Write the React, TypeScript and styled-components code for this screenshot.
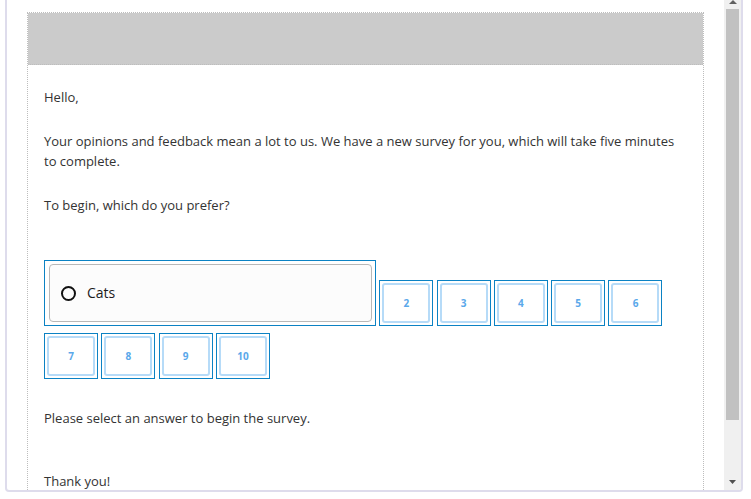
import React from "react";
import styled, { createGlobalStyle } from "styled-components";

const Global = createGlobalStyle`
  html, body { margin: 0; padding: 0; background: #ffffff; overflow: hidden; }
  body { font-family: "Open Sans", "Liberation Sans", sans-serif; }
  * { box-sizing: border-box; }
`;

const Page = styled.div`
  width: 751px;
  height: 499px;
  padding: 0 8px 0 5px;
`;

const Frame = styled.div`
  display: flex;
  height: 492px;
  border: 2px solid #dedcec;
  border-top: none;
  border-radius: 0 0 4px 4px;
  overflow: hidden;
`;

const Content = styled.div`
  flex: 1;
  min-width: 0;
  padding: 12px 20px 0 20px;
  overflow: hidden;
`;

const Mail = styled.div`
  border: 1px dotted #bdbdbd;
  border-bottom: none;
  height: 100%;
`;

const Banner = styled.div`
  height: 52px;
  background: #cbcbcb;
  border-bottom: 1px dotted #bdbdbd;
`;

const Body = styled.div`
  padding: 22px 16px 0 16px;
  color: #333333;
  font-size: 13px;
  line-height: 20px;
`;

const Para = styled.p<{ $gap?: number }>`
  margin: 0 0 ${(p) => p.$gap ?? 24}px 0;
`;

const Choices = styled.div`
  display: flex;
  flex-wrap: wrap;
  align-items: flex-end;
  column-gap: 3.3px;
  row-gap: 7px;
  margin: 45px 0 29px 0;
`;

const OptionOuter = styled.div`
  width: 332px;
  height: 66px;
  border: 1px solid #0b82c4;
  padding: 3px 3px 3px 4px;
`;

const OptionInner = styled.div`
  height: 100%;
  border: 1px solid #b8b8b8;
  border-radius: 4px;
  background: #fcfcfc;
  display: flex;
  align-items: center;
  padding-left: 11px;
  gap: 11px;
`;

const Radio = styled.span`
  width: 15px;
  height: 15px;
  border: 2px solid #111111;
  border-radius: 50%;
  flex: none;
`;

const OptionLabel = styled.span`
  font-size: 14px;
  color: #1c1c1c;
`;

const NumOuter = styled.div`
  width: 54px;
  height: 46px;
  border: 1px solid #0b82c4;
  padding: 2px;
`;

const NumInner = styled.div`
  height: 100%;
  border: 2px solid #b6dbf8;
  border-radius: 3px;
  display: flex;
  align-items: center;
  justify-content: center;
  font-size: 10px;
  font-weight: 700;
  color: #5aa8ea;
`;

const Scrollbar = styled.div`
  width: 17px;
  flex: none;
  background: #f0f0f0;
  display: flex;
  flex-direction: column;
  align-items: center;
`;

const ArrowUp = styled.div`
  height: 9px;
  width: 100%;
  display: flex;
  justify-content: center;
  align-items: flex-start;
`;

const Thumb = styled.div`
  width: 13px;
  height: 411px;
  background: #c1c1c1;
`;

const Spacer = styled.div`
  flex: 1;
`;

const ArrowDown = styled.div`
  height: 17px;
  width: 100%;
  display: flex;
  justify-content: center;
  align-items: flex-start;
  padding-top: 7px;
`;

const numbers = [2, 3, 4, 5, 6, 7, 8, 9, 10];

export default function App() {
  return (
    <Page>
      <Global />
      <Frame>
        <Content>
          <Mail>
            <Banner />
            <Body>
              <Para>Hello,</Para>
              <Para>
                Your opinions and feedback mean a lot to us. We have a new survey for you, which will take five minutes
                to complete.
              </Para>
              <Para $gap={0}>To begin, which do you prefer?</Para>
              <Choices>
                <OptionOuter>
                  <OptionInner>
                    <Radio />
                    <OptionLabel>Cats</OptionLabel>
                  </OptionInner>
                </OptionOuter>
                {numbers.map((n) => (
                  <NumOuter key={n}>
                    <NumInner>{n}</NumInner>
                  </NumOuter>
                ))}
              </Choices>
              <Para $gap={43}>Please select an answer to begin the survey.</Para>
              <Para $gap={0}>Thank you!</Para>
            </Body>
          </Mail>
        </Content>
        <Scrollbar>
          <ArrowUp>
            <svg width="8" height="4" viewBox="0 0 8 4">
              <path d="M0 4 L4 0 L8 4 Z" fill="#606060" />
            </svg>
          </ArrowUp>
          <Thumb />
          <Spacer />
          <ArrowDown>
            <svg width="7" height="4" viewBox="0 0 7 4">
              <path d="M0 0 L7 0 L3.5 4 Z" fill="#505050" />
            </svg>
          </ArrowDown>
        </Scrollbar>
      </Frame>
    </Page>
  );
}
